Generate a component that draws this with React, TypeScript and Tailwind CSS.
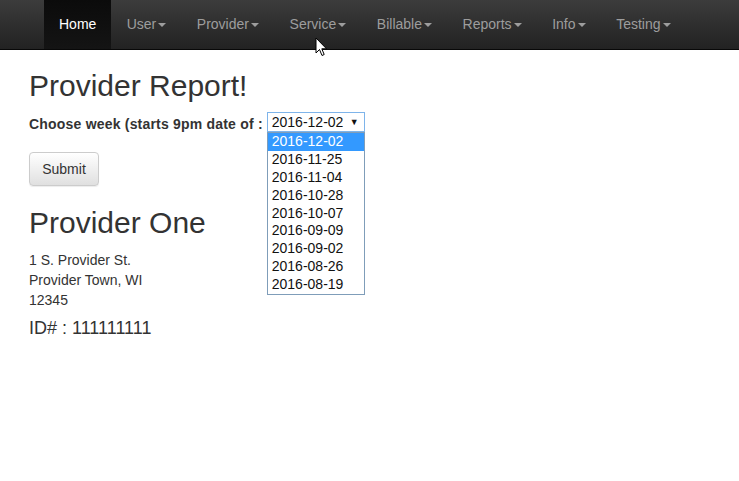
const navItems = ["User", "Provider", "Service", "Billable", "Reports", "Info", "Testing"];
const weeks = [
  "2016-12-02",
  "2016-11-25",
  "2016-11-04",
  "2016-10-28",
  "2016-10-07",
  "2016-09-09",
  "2016-09-02",
  "2016-08-26",
  "2016-08-19",
];

function Caret() {
  return <span className="ml-[2px] inline-block h-0 w-0 border-x-[4px] border-t-[4px] border-x-transparent border-t-current align-middle" />;
}

export default function App() {
  return (
    <div className="relative min-h-[481px] bg-white text-[14px] text-[#333] [font-family:'Liberation_Sans',Arial,sans-serif]">
      <nav className="h-[50px] border-b border-[#080808] bg-gradient-to-b from-[#3c3c3c] to-[#222]">
        <ul className="flex h-full pl-[44px]">
          <li className="flex h-full items-center bg-gradient-to-b from-[#0b0b0b] to-[#141414] px-[15px] text-white">
            Home
          </li>
          {navItems.map((n) => (
            <li key={n} className="flex h-full items-center px-[15.3px] text-[#9d9d9d]">
              {n}
              <Caret />
            </li>
          ))}
        </ul>
      </nav>

      <main className="px-[29px]">
        <h1 className="mt-[18px] text-[30px] leading-[36px] text-[#333]">Provider Report!</h1>
        <div className="mt-[8px] flex items-start">
          <label className="mt-[2px] font-bold tracking-[0.2px]">Choose week (starts 9pm date of :</label>
          <div className="relative ml-[4px]">
            <div className="flex h-[20px] w-[98px] items-center justify-between border border-[#7eb4ea] bg-white pl-[4px] pr-[5px] leading-[18px] text-[#111]">
              <span>2016-12-02</span>
              <span className="text-[9px]">▼</span>
            </div>
            <ul className="absolute left-0 top-[20px] z-10 w-[98px] border border-[#7f9db9] bg-white text-[#111]">
              {weeks.map((w, i) => (
                <li
                  key={w}
                  className={
                    i === 0
                      ? "h-[17.9px] bg-[#3399ff] pl-[4px] leading-[17.9px] text-white"
                      : "h-[17.9px] pl-[4px] leading-[17.9px]"
                  }
                >
                  {w}
                </li>
              ))}
            </ul>
          </div>
        </div>

        <button className="mt-[17px] h-[34px] w-[70px] rounded-[4px] border border-[#ccc] bg-gradient-to-b from-white to-[#e0e0e0] text-[14px] text-[#333] shadow-[inset_0_1px_0_rgba(255,255,255,0.15),0_1px_1px_rgba(0,0,0,0.075)]">
          Submit
        </button>

        <h2 className="mt-[20px] text-[30px] leading-[33px]">Provider One</h2>
        <div className="mt-[11px] leading-[20px]">
          <div>1 S. Provider St.</div>
          <div>Provider Town, WI</div>
          <div>12345</div>
        </div>
        <div className="mt-[8px] text-[18px] leading-[20px]">ID# : 111111111</div>
      </main>

      <svg className="absolute left-[315px] top-[37px]" width="13" height="20" viewBox="0 0 13 20">
        <path d="M1 1 L1 16 L4.5 12.5 L7 18.5 L9.2 17.5 L6.8 11.8 L11.5 11.8 Z" fill="white" stroke="black" strokeWidth="1" strokeLinejoin="round" />
      </svg>
    </div>
  );
}
